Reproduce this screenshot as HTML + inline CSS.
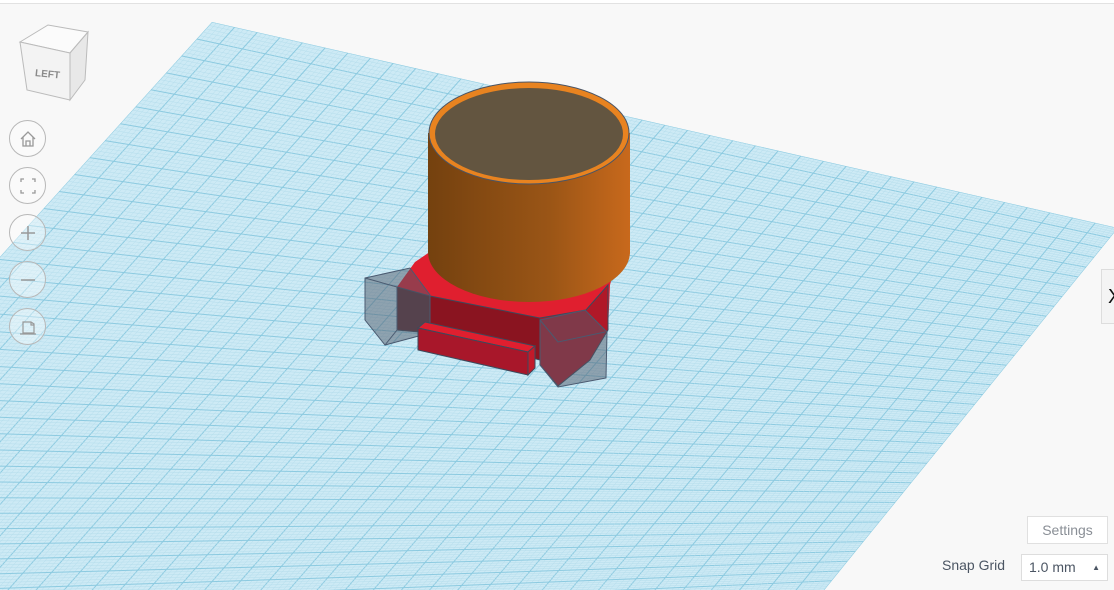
<!DOCTYPE html>
<html><head><meta charset="utf-8"><style>
html,body{margin:0;padding:0;width:1114px;height:590px;overflow:hidden;background:#f8f8f8;font-family:"Liberation Sans",sans-serif}
.topbar{position:absolute;left:0;top:0;width:1114px;height:3px;border-bottom:1px solid #e2e2e2;background:#fff}
.btn{position:absolute;left:9px;width:37px;height:37px;border:1px solid #b8b8b8;border-radius:50%;box-sizing:border-box;background:rgba(255,255,255,.35)}
.btn svg{position:absolute;left:1px;top:1px}
.set{position:absolute;left:1027px;top:516px;width:81px;height:28px;border:1px solid #e0e0e0;background:#fff;box-sizing:border-box;color:#8a8f96;font-size:14px;line-height:26px;text-align:center}
.snap{position:absolute;left:942px;top:557px;color:#4b5563;font-size:14px}
.sel{position:absolute;left:1021px;top:554px;width:87px;height:27px;border:1px solid #ddd;background:#fff;box-sizing:border-box;color:#4b5563;font-size:14px;line-height:25px;padding-left:7px}
.tab{position:absolute;left:1101px;top:269px;width:16px;height:55px;border:1px solid #ddd;background:#f4f4f4;box-sizing:border-box;font-size:20px;line-height:55px;padding-left:6px;color:#111}
</style></head><body>
<svg id="s" width="1114" height="590" style="position:absolute;left:0;top:0">
<defs>
<clipPath id="pc"><polygon points="212,22 1118,228 800,620 -400,700"/></clipPath>
<linearGradient id="cyl" x1="0" x2="1"><stop offset="0" stop-color="#74410f"/><stop offset=".6" stop-color="#9a5516"/><stop offset="1" stop-color="#c8691c"/></linearGradient>
</defs>
<polygon points="212,22 1118,228 800,620 -400,700" fill="#cdeaf5"/>
<g id="grid" clip-path="url(#pc)"></g>
<!-- red base -->
<polygon points="397,287 415,262 440,245 620,245 610,285 608,330 590,325 540,318 430,296" fill="#e01f2f"/>
<polygon points="397,287 430,296 430,333 397,330" fill="#5a2a30" stroke="#3c4a5c" stroke-width="1"/>
<polygon points="430,296 540,318 540,360 430,333" fill="#8a1420" stroke="#3c4a5c" stroke-width="1"/>
<polygon points="540,318 586,310 608,285 608,330 590,360 558,386 540,365" fill="#b01828" stroke="#3c4a5c" stroke-width="1"/>
<!-- cylinder -->
<path d="M428,133 L428,252 A101,50 0 0 0 630,252 L630,133 Z" fill="url(#cyl)"/>
<ellipse cx="529" cy="133" rx="100" ry="51" fill="#e88320" stroke="#4a5566" stroke-width="1"/>
<ellipse cx="529" cy="134" rx="94" ry="46" fill="#635540"/>
<!-- gray cubes -->
<polygon points="365,278 410,268 430,295 430,333 385,345 365,320" fill="rgba(80,90,105,.5)" stroke="#4a5a70" stroke-width="1"/>
<polyline points="365,278 397,287 397,330 385,345 M397,287 430,296" fill="none" stroke="#4a5a70"/>
<polygon points="540,320 585,310 607,332 606,378 558,387 540,365" fill="rgba(80,90,105,.5)" stroke="#4a5a70" stroke-width="1"/>
<polyline points="540,320 558,342 605,332 M558,342 558,387" fill="none" stroke="#4a5a70"/>
<!-- bar -->
<polygon points="418,328 425,322 535,346 528,352" fill="#e01f2f" stroke="#3c4a5c"/>
<polygon points="418,328 528,352 528,375 418,350" fill="#a8172a" stroke="#3c4a5c"/>
<polygon points="528,352 535,346 535,368 528,375" fill="#c21a2a" stroke="#3c4a5c"/>
<!-- view cube -->
<polygon points="20,42 48,25 88,32 70,53" fill="#fbfbfb" stroke="#bbb"/>
<polygon points="20,42 70,53 70,100 27,90" fill="#f3f3f3" stroke="#bbb"/>
<polygon points="70,53 88,32 85,80 70,100" fill="#e8e8e8" stroke="#bbb"/>
<text x="35" y="77" font-size="10" fill="#8a8a8a" font-family="Liberation Sans" font-weight="bold" transform="rotate(6 45 74)">LEFT</text>
</svg>
<div class="topbar"></div>
<div class="btn" style="top:120px"><svg width="34" height="34"><path d="M10,17 L17,10 L24,17 M12,15 L12,24 L22,24 L22,15 M15,24 L15,19 L19,19 L19,24" fill="none" stroke="#999" stroke-width="1.3"/></svg></div>
<div class="btn" style="top:167px"><svg width="34" height="34"><path d="M10,13 V10 H13 M21,10 H24 V13 M24,21 V24 H21 M13,24 H10 V21" fill="none" stroke="#999" stroke-width="1.3"/></svg></div>
<div class="btn" style="top:214px"><svg width="34" height="34"><path d="M17,10 V24 M10,17 H24" stroke="#999" stroke-width="1.5"/></svg></div>
<div class="btn" style="top:261px"><svg width="34" height="34"><path d="M10,17 H24" stroke="#999" stroke-width="1.5"/></svg></div>
<div class="btn" style="top:308px"><svg width="34" height="34"><path d="M12,12 H20 L23,14 V23 H12 Z M20,12 V15 H23 M9,24 H25" fill="none" stroke="#999" stroke-width="1.2"/></svg></div>
<div class="tab">X</div>
<div class="set">Settings</div>
<div class="snap">Snap Grid</div>
<div class="sel">1.0 mm<span style="position:absolute;right:7px;top:0;font-size:8px">▲</span></div>
<script>
var g=document.getElementById('grid'),N=40;
var A=[212,22],B=[1118,228],C=[800,620],D=[-400,700];
function P(u,v){return [A[0]*(1-u)*(1-v)+B[0]*u*(1-v)+C[0]*u*v+D[0]*(1-u)*v, A[1]*(1-u)*(1-v)+B[1]*u*(1-v)+C[1]*u*v+D[1]*(1-u)*v];}
var h='';
for(var i=0;i<=N*5;i++){var t=i/(N*5),maj=i%5==0;var st=maj?'stroke="#8ccae0" stroke-width="1"':'stroke="#b5ddec" stroke-width="0.5"';
var a=P(t,0),b=P(t,1);h+='<line x1="'+a[0]+'" y1="'+a[1]+'" x2="'+b[0]+'" y2="'+b[1]+'" '+st+'/>';
a=P(0,t);b=P(1,t);h+='<line x1="'+a[0]+'" y1="'+a[1]+'" x2="'+b[0]+'" y2="'+b[1]+'" '+st+'/>';}
g.innerHTML=h;
</script>
</body></html>
